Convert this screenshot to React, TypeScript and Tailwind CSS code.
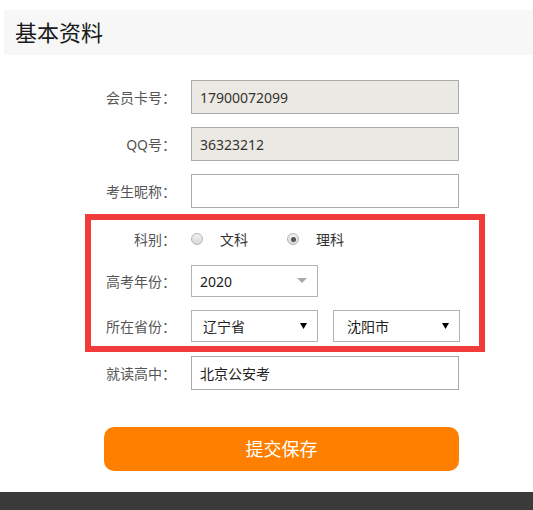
import { ReactNode } from 'react';

const font = "font-['Noto_Sans','Noto_Sans_CJK_SC',sans-serif]";

const Row = ({ label, children, className = '' }: { label: string; children: ReactNode; className?: string }) => (
  <div className={`flex items-center ${className}`}>
    <label className="w-[85px] text-right text-[14px] text-[#555] whitespace-nowrap">{label}</label>
    <div className="ml-[15px] flex items-center gap-[15px]">{children}</div>
  </div>
);

const Radio = ({ checked, label }: { checked?: boolean; label: string }) => (
  <label className="flex items-center text-[14px] text-[#333]">
    <span className="w-[12px] h-[12px] rounded-full border border-[#b5b5b5] bg-gradient-to-b from-[#f0f0f0] to-[#d9d9d9] flex items-center justify-center">
      {checked && <span className="w-[5px] h-[5px] rounded-full bg-[#555]" />}
    </span>
    <span className="ml-[17px]">{label}</span>
  </label>
);

const Arrow = () => (
  <svg width="7" height="6" viewBox="0 0 7 6"><path d="M0 0h7L3.5 6z" fill="#000" /></svg>
);

const Select = ({ value, className = '' }: { value: string; className?: string }) => (
  <div className={`h-[32px] w-[127px] border border-[#b3b3b3] bg-white flex items-center justify-between pl-[11px] pr-[10px] text-[14px] text-[#222] ${className}`}>
    <span>{value}</span>
    <Arrow />
  </div>
);

export default function App() {
  return (
    <div className={`${font} bg-white min-h-[510px] overflow-hidden`}>
      <div className="mt-[10px] ml-[4px] h-[45px] bg-[#f7f7f7] flex items-center pl-[11px]">
        <h1 className="text-[22px] text-[#1a1a1a]">基本资料</h1>
      </div>

      <div className="mt-[25px] pl-[6px]">
        <Row label="会员卡号：" className="pl-[85px]">
          <div className="h-[34px] w-[268px] border border-[#aaa] bg-[#ebe9e3] flex items-center px-[8px] text-[14px] text-[#333]">17900072099</div>
        </Row>
        <Row label="QQ号：" className="pl-[85px] mt-[13px]">
          <div className="h-[34px] w-[268px] border border-[#aaa] bg-[#ebe9e3] flex items-center px-[8px] text-[14px] text-[#333]">36323212</div>
        </Row>
        <Row label="考生昵称：" className="pl-[85px] mt-[13px]">
          <div className="h-[34px] w-[268px] border border-[#aaa] bg-white" />
        </Row>

        <div className="mt-[6px] ml-[79px] w-[400px] border-[6px] border-[#f13b3b] pb-[4px]">
          <Row label="科别：" className="mt-[3px] h-[32px]">
            <div className="flex items-center gap-[39px]">
              <Radio label="文科" />
              <Radio checked label="理科" />
            </div>
          </Row>
          <Row label="高考年份：" className="mt-[10px]">
            <div className="h-[32px] w-[127px] border border-[#b3b3b3] bg-white flex items-center justify-between pl-[8px] pr-[10px] text-[14px] text-[#222]">
              <span>2020</span>
              <svg width="10" height="6" viewBox="0 0 10 6"><path d="M0 0h10L5 5z" fill="#aaa" /></svg>
            </div>
          </Row>
          <Row label="所在省份：" className="mt-[13px]">
            <Select value="辽宁省" />
            <Select value="沈阳市" className="pl-[13px]" />
          </Row>
        </div>

        <Row label="就读高中：" className="pl-[85px] mt-[4px]">
          <div className="h-[34px] w-[268px] border border-[#aaa] bg-white flex items-center px-[8px] text-[14px] text-[#222]">北京公安考</div>
        </Row>
      </div>

      <button className="mt-[37px] ml-[104px] w-[355px] h-[44px] rounded-[10px] bg-[#ff8000] text-white text-[18px]">提交保存</button>

      <div className="mt-[21px] h-[40px] bg-[#3a3a3a]" />
    </div>
  );
}
